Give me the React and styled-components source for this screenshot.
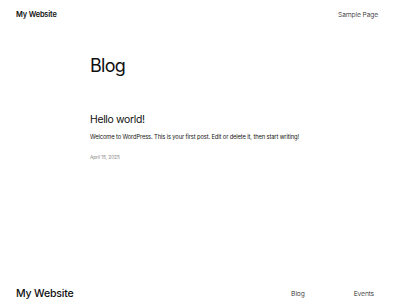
import React from 'react'
import styled, { createGlobalStyle } from 'styled-components'

const Global = createGlobalStyle`
  html, body {
    margin: 0;
    padding: 0;
    background: #fff;
  }
  body {
    font-family: Inter, 'Noto Sans', sans-serif;
    color: #111;
  }
`;

const Page = styled.div`
  display: flex;
  flex-direction: column;
  min-height: 425px;
`;

const Header = styled.header`
  display: flex;
  justify-content: space-between;
  align-items: center;
  height: 28px;
  padding: 0 22px 0 16px;
`;

const SiteTitle = styled.a`
  font-size: ${p => p.$big ? '10.6px' : '7.4px'};
  font-weight: ${p => p.$big ? 500 : 600};
  letter-spacing: -0.02em;
  color: #111;
  text-decoration: none;
`;

const NavLink = styled.a`
  font-size: 6.8px;
  font-weight: 300;
  letter-spacing: -0.02em;
  color: #222;
  text-decoration: none;
`;

const Main = styled.main`
  display: flex;
  flex-direction: column;
  padding: 0 0 0 90px;
  max-width: 230px;
`;

const PageTitle = styled.h1`
  margin: 27px 0 0;
  font-size: 18px;
  font-weight: 400;
  letter-spacing: -0.04em;
  line-height: 1.2;
`;

const Post = styled.article`
  display: flex;
  flex-direction: column;
  margin-top: 37px;
`;

const PostTitle = styled.h2`
  margin: 0;
  font-size: 10.4px;
  font-weight: 400;
  letter-spacing: -0.03em;
  line-height: 1.2;
`;

const Excerpt = styled.p`
  margin: 7px 0 0;
  font-size: 5.75px;
  font-weight: 400;
  letter-spacing: -0.02em;
  white-space: nowrap;
  line-height: 1.4;
`;

const PostDate = styled.time`
  margin-top: 13px;
  font-size: 4.8px;
  color: #888;
  letter-spacing: -0.02em;
`;

const Footer = styled.footer`
  display: flex;
  flex-direction: column;
  gap: 40px;
  margin-top: 127px;
  padding: 0 26px 30px 16px;
`;

const FooterRow = styled.div`
  display: flex;
  align-items: center;
  justify-content: space-between;
`;

const FooterNav = styled.nav`
  display: flex;
  gap: 49px;
`;

const Credit = styled.p`
  margin: 0;
  font-size: 5.5px;
  color: #444;
`;

export default function App() {
  return (
    <Page>
      <Global />
      <Header>
        <SiteTitle href="#">My Website</SiteTitle>
        <NavLink href="#">Sample Page</NavLink>
      </Header>
      <Main>
        <PageTitle>Blog</PageTitle>
        <Post>
          <PostTitle>Hello world!</PostTitle>
          <Excerpt>Welcome to WordPress. This is your first post. Edit or delete it, then start writing!</Excerpt>
          <PostDate>April 15, 2025</PostDate>
        </Post>
      </Main>
      <Footer>
        <FooterRow>
          <SiteTitle $big href="#">My Website</SiteTitle>
          <FooterNav>
            <NavLink href="#">Blog</NavLink>
            <NavLink href="#">Events</NavLink>
          </FooterNav>
        </FooterRow>
        <Credit>Designed with WordPress</Credit>
      </Footer>
    </Page>
  )
}
